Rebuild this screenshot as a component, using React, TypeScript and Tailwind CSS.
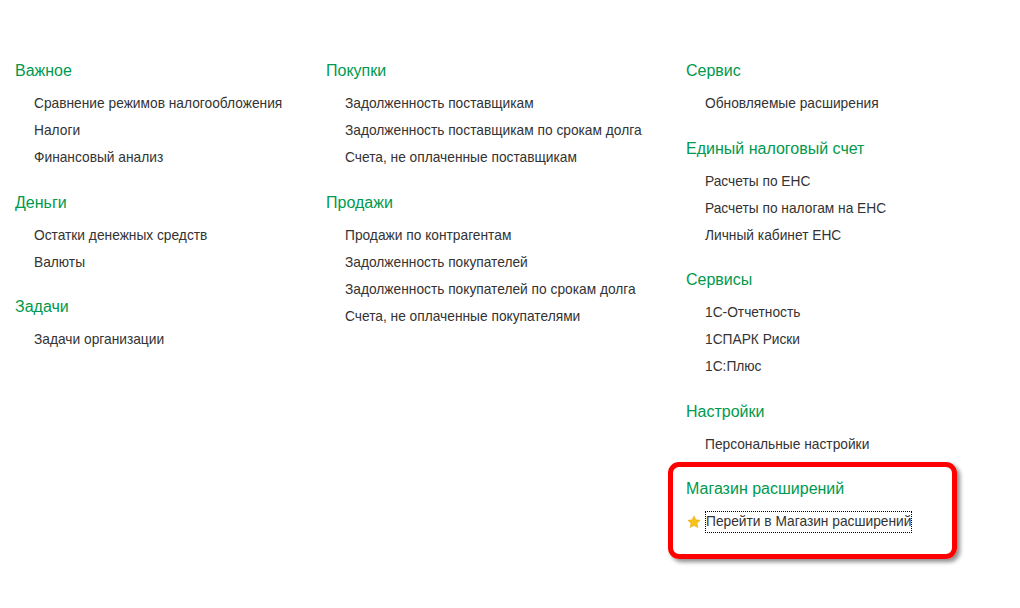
import React from "react";

type Section = { title: string; items: string[] };

const col1: Section[] = [
  { title: "Важное", items: ["Сравнение режимов налогообложения", "Налоги", "Финансовый анализ"] },
  { title: "Деньги", items: ["Остатки денежных средств", "Валюты"] },
  { title: "Задачи", items: ["Задачи организации"] },
];

const col2: Section[] = [
  {
    title: "Покупки",
    items: [
      "Задолженность поставщикам",
      "Задолженность поставщикам по срокам долга",
      "Счета, не оплаченные поставщикам",
    ],
  },
  {
    title: "Продажи",
    items: [
      "Продажи по контрагентам",
      "Задолженность покупателей",
      "Задолженность покупателей по срокам долга",
      "Счета, не оплаченные покупателями",
    ],
  },
];

const col3: Section[] = [
  { title: "Сервис", items: ["Обновляемые расширения"] },
  { title: "Единый налоговый счет", items: ["Расчеты по ЕНС", "Расчеты по налогам на ЕНС", "Личный кабинет ЕНС"] },
  { title: "Сервисы", items: ["1С-Отчетность", "1СПАРК Риски", "1С:Плюс"] },
  { title: "Настройки", items: ["Персональные настройки"] },
];

function SectionBlock({ s }: { s: Section }) {
  return (
    <div className="flex flex-col">
      <div className="h-[20px] leading-[20px] text-[16px] text-[#00994d] whitespace-nowrap">{s.title}</div>
      <div className="mt-[9px] flex flex-col pl-[19px]">
        {s.items.map((it) => (
          <div key={it} className="h-[27px] leading-[27px] text-[13.75px] text-[#333333] whitespace-nowrap">
            {it}
          </div>
        ))}
      </div>
    </div>
  );
}

function Column({ sections, className }: { sections: Section[]; className?: string }) {
  return (
    <div className={"flex flex-col gap-[21.5px] " + (className ?? "")}>
      {sections.map((s) => (
        <SectionBlock key={s.title} s={s} />
      ))}
    </div>
  );
}

export default function App() {
  return (
    <div
      className="relative w-[1020px] h-[608px] bg-white overflow-hidden"
      style={{ fontFamily: '"Liberation Sans", Arial, sans-serif' }}
    >
      <div className="flex pt-[61px] pl-[15px]">
        <Column sections={col1} className="w-[311px]" />
        <Column sections={col2} className="w-[360px]" />
        <div className="flex flex-col gap-[21.5px]">
          {col3.map((s) => (
            <SectionBlock key={s.title} s={s} />
          ))}
          <div className="flex flex-col">
            <div className="h-[20px] leading-[20px] text-[16px] text-[#00994d] whitespace-nowrap">
              Магазин расширений
            </div>
            <div className="mt-[9px] flex items-center h-[27px]">
              <svg width="14" height="14" viewBox="0 0 24 24" className="ml-[1px] mr-[4px]">
                <path
                  d="M12 1.5l3.2 6.8 7.3.9-5.4 5 1.4 7.3L12 17.9l-6.5 3.6 1.4-7.3-5.4-5 7.3-.9z"
                  fill="#f7c21a"
                  stroke="#e9a90c"
                  strokeWidth="1"
                  strokeLinejoin="round"
                />
              </svg>
              <span className="h-[22px] leading-[20px] text-[13.75px] text-[#333333] whitespace-nowrap border border-dotted border-black">
                Перейти в Магазин расширений
              </span>
            </div>
          </div>
        </div>
      </div>
      <div className="absolute left-[668px] top-[462px] w-[289px] h-[97px] rounded-[11px] border-[5px] border-[#ff0000] shadow-[3px_3px_4px_rgba(0,0,0,0.45)] pointer-events-none" />
    </div>
  );
}
